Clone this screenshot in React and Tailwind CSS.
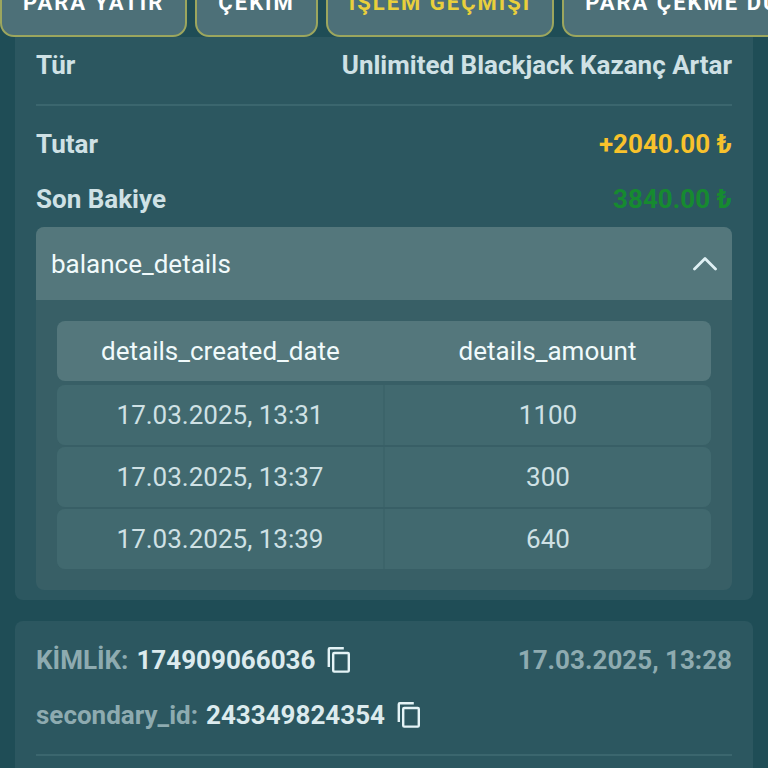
import React, { useState } from 'react';

const tabs = ['PARA YATIR', 'ÇEKİM', 'İŞLEM GEÇMİŞİ', 'PARA ÇEKME DURUMU'];

const details = [
  { date: '17.03.2025, 13:31', amount: 1100 },
  { date: '17.03.2025, 13:37', amount: 300 },
  { date: '17.03.2025, 13:39', amount: 640 },
];

const Tabs = () => {
  const [active, setActive] = useState('İŞLEM GEÇMİŞİ');

  return (
    <nav className="flex items-end gap-2 h-[37px] overflow-hidden">
      {tabs.map((tab) => (
        <button
          key={tab}
          type="button"
          onClick={() => setActive(tab)}
          className={`shrink-0 h-[68px] px-[21px] rounded-[14px] border-2 border-[#9ca65e] bg-[#4d7078] text-[22px] font-bold tracking-[2px] whitespace-nowrap ${
            active === tab ? 'text-[#e9cf3c]' : 'text-white'
          }`}
        >
          {tab}
        </button>
      ))}
    </nav>
  );
};

const Row = ({ label, value, valueClass }) => (
  <div className="flex items-center justify-between h-[55px] font-bold">
    <span>{label}</span>
    <span className={valueClass}>{value}</span>
  </div>
);

const CopyId = ({ label, value }) => (
  <div className="flex items-center h-[55px] font-bold">
    <span className="text-[#8eabb0]">{label}</span>
    <span className="ml-2 text-[#dcebee]">{value}</span>
    <button
      type="button"
      aria-label="Kopyala"
      onClick={() => navigator.clipboard?.writeText(value)}
      className="ml-2.5 cursor-pointer"
    >
      <svg width="28" height="28" viewBox="0 0 28 28" fill="none" stroke="#e4f3f6" strokeWidth="2.4">
        <path d="M3.8 21V3.2a1 1 0 0 1 1-1h14" />
        <rect x="8.2" y="7" width="15.6" height="18.6" rx="1" />
      </svg>
    </button>
  </div>
);

const BalanceDetails = () => {
  const [open, setOpen] = useState(true);

  return (
    <div className="mt-px rounded-lg overflow-hidden bg-[#385f66]">
      <button
        type="button"
        aria-expanded={open}
        onClick={() => setOpen(!open)}
        className="flex items-center justify-between w-full h-[73px] px-[15px] bg-[#54777c] text-[#f0fafb]"
      >
        <span>balance_details</span>
        <svg
          className={open ? '' : 'rotate-180'}
          width="24"
          height="24"
          viewBox="0 0 24 24"
          fill="none"
          stroke="#dff0f4"
          strokeWidth="2.8"
          strokeLinecap="round"
          strokeLinejoin="round"
        >
          <path d="M1.5 17 12 6.5 22.5 17" />
        </svg>
      </button>
      {open && (
        <div className="p-[21px]">
          <table className="block w-full text-center">
            <thead className="block rounded-lg bg-[#54777c] text-[#f0fafb]">
              <tr className="flex items-center h-[60px]">
                <th className="flex-1 font-normal">details_created_date</th>
                <th className="flex-1 font-normal">details_amount</th>
              </tr>
            </thead>
            <tbody className="flex flex-col gap-0.5 mt-1">
              {details.map((item) => (
                <tr key={item.date} className="flex gap-0.5 h-[60px] rounded-lg overflow-hidden bg-[#3c646a]">
                  <td className="flex flex-1 items-center justify-center bg-[#41696f]">{item.date}</td>
                  <td className="flex flex-1 items-center justify-center bg-[#41696f]">{item.amount}</td>
                </tr>
              ))}
            </tbody>
          </table>
        </div>
      )}
    </div>
  );
};

const App = () => {
  return (
    <div className="h-screen overflow-hidden bg-[#1f4d56] font-[Roboto,sans-serif] text-[26px] leading-8 text-[#cfe1e5]">
      <Tabs />
      <main className="flex flex-col gap-[21px] px-[15px]">
        <section className="px-[21px] pb-[10px] rounded-b-lg bg-[#2c5760]">
          <Row label="Tür" value="Unlimited Blackjack Kazanç Artar" />
          <hr className="mt-3 mb-[10px] border-t-2 border-[#3b666e]" />
          <Row label="Tutar" value="+2040.00 ₺" valueClass="text-[#f8c22c]" />
          <Row label="Son Bakiye" value="3840.00 ₺" valueClass="text-[#168a30]" />
          <BalanceDetails />
        </section>

        <section className="px-[21px] pt-[11px] pb-10 rounded-lg bg-[#2c5760]">
          <div className="flex items-start justify-between">
            <div>
              <CopyId label="KİMLİK:" value="174909066036" />
              <CopyId label="secondary_id:" value="243349824354" />
            </div>
            <time className="flex items-center h-[55px] font-bold text-[#8eabb0]">17.03.2025, 13:28</time>
          </div>
          <hr className="mt-3 border-t-2 border-[#3b666e]" />
        </section>
      </main>
    </div>
  );
};

export default App;
